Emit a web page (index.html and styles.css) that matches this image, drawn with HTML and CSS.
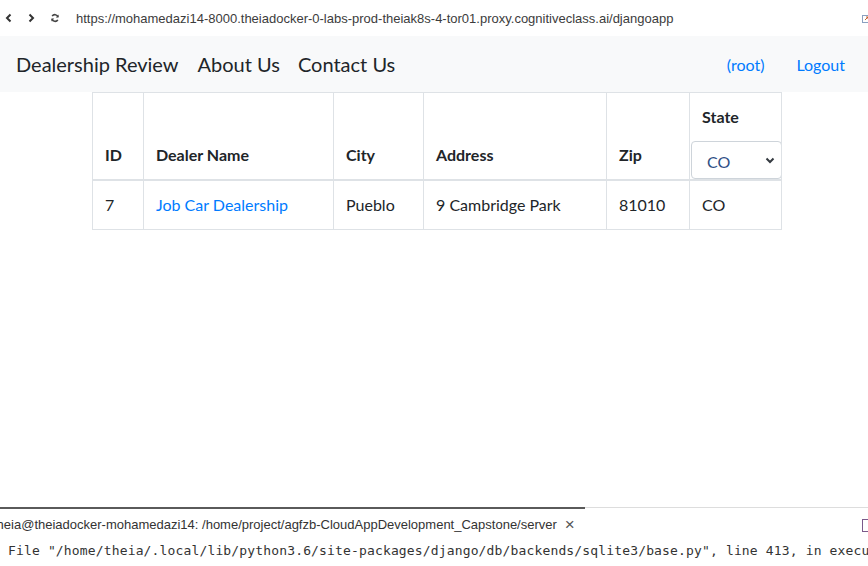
FILE: index.html
```html
<!DOCTYPE html>
<html>
<head>
<meta charset="utf-8">
<link rel="stylesheet" href="styles.css">
</head>
<body>
<div class="page">
  <div class="browserbar">
    <svg class="bicon" width="10" height="10" viewBox="0 0 10 10"><path d="M6.5 1.5 L3 5 L6.5 8.5" fill="none" stroke="#333" stroke-width="2"/></svg>
    <svg class="bicon" width="10" height="10" viewBox="0 0 10 10"><path d="M3.5 1.5 L7 5 L3.5 8.5" fill="none" stroke="#333" stroke-width="2"/></svg>
    <svg class="bicon" width="10" height="10" viewBox="0 0 10 10"><path d="M8 4 A3.2 3.2 0 0 0 2.2 3.2 M2 6 A3.2 3.2 0 0 0 7.8 6.8" fill="none" stroke="#444" stroke-width="1.6"/><path d="M8.6 1.6 L8.6 4.4 L5.8 4.4Z M1.4 8.4 L1.4 5.6 L4.2 5.6Z" fill="#444"/></svg>
    <span class="url">https://mohamedazi14-8000.theiadocker-0-labs-prod-theiak8s-4-tor01.proxy.cognitiveclass.ai/djangoapp</span>
    <svg class="popout" width="8" height="9" viewBox="0 0 8 9"><rect x="0.5" y="1.5" width="7" height="7" fill="none" stroke="#8aa0c0"/><path d="M3 6 L6 3 M4 3 H6 V5" stroke="#c06030" fill="none"/></svg>
  </div>
  <nav class="navbar">
    <a class="brand">Dealership Review</a>
    <a class="navlink">About Us</a>
    <a class="navlink">Contact Us</a>
    <div class="navright">
      <a class="userlink">(root)</a>
      <a class="userlink">Logout</a>
    </div>
  </nav>
  <main class="content">
    <table class="dealers">
      <thead>
        <tr>
          <th class="c-id">ID</th>
          <th class="c-name">Dealer Name</th>
          <th class="c-city">City</th>
          <th class="c-addr">Address</th>
          <th class="c-zip">Zip</th>
          <th class="c-state">
            <div class="state-label">State</div>
            <div class="select"><span>CO</span><svg width="10" height="7" viewBox="0 0 10 7"><path d="M1.5 1.5 L5 5 L8.5 1.5" fill="none" stroke="#343a40" stroke-width="2"/></svg></div>
          </th>
        </tr>
      </thead>
      <tbody>
        <tr>
          <td>7</td>
          <td><a class="dealer-link">Job Car Dealership</a></td>
          <td>Pueblo</td>
          <td>9 Cambridge Park</td>
          <td>81010</td>
          <td>CO</td>
        </tr>
      </tbody>
    </table>
  </main>
  <section class="panel">
    <div class="tabs">
      <div class="tab active"><span class="tabtitle">theia@theiadocker-mohamedazi14: /home/project/agfzb-CloudAppDevelopment_Capstone/server</span><span class="close">×</span></div>
      <div class="tabrest"><span class="maxicon"></span></div>
    </div>
    <div class="terminal">File "/home/theia/.local/lib/python3.6/site-packages/django/db/backends/sqlite3/base.py", line 413, in execute</div>
  </section>
</div>
</body>
</html>
```
FILE: styles.css
```css
html, body { margin: 0; padding: 0; }
body { width: 868px; height: 566px; overflow: hidden; background: #fff; }
.page { display: flex; flex-direction: column; height: 566px; }

.browserbar {
  height: 36px; display: flex; align-items: center; padding-left: 0;
  font-family: "Liberation Sans", Arial, sans-serif; font-size: 13px; color: #444;
  white-space: nowrap; overflow: hidden;
}
.bicon { margin: 0 6px 0 4px; flex: none; }
.bicon:nth-child(2) { margin-left: 6px; }
.bicon:nth-child(3) { margin-left: 8px; }
.url { margin-left: 10px; color: #3c3c3c; }
.popout { margin-left: auto; margin-right: -2px; flex: none; }

.navbar {
  height: 56px; background: #f8f9fa; display: flex; align-items: center;
  padding: 0 23px 0 16px; font-family: "Lato", "Noto Sans", sans-serif;
}
.brand { font-size: 20px; color: #212529; margin-right: 19px; }
.navlink { font-size: 20px; color: #212529; margin-right: 18px; }
.navright { margin-left: auto; display: flex; gap: 32px; }
.userlink { font-size: 16px; color: #007bff; }

.content { padding-left: 92px; }
.dealers {
  border-collapse: collapse; font-family: "Lato", "Noto Sans", sans-serif;
  font-size: 16px; color: #212529; line-height: 24px;
}
.dealers th, .dealers td {
  border: 1px solid #dee2e6; padding: 12px; text-align: left; vertical-align: bottom;
}
.dealers th { font-weight: 700; border-bottom-width: 2px; }
.dealers td { vertical-align: top; }
.c-id { width: 26px; }
.c-name { width: 165px; }
.c-city { width: 65px; }
.c-addr { width: 158px; }
.c-zip { width: 58px; }
.dealers th.c-state { width: 67px; padding-bottom: 0; }
.state-label { margin-bottom: 12px; }
.select {
  box-sizing: border-box; height: 38px; width: 91px; margin: 0 -13px 0 -11px;
  border: 1px solid #ced4da; border-radius: 4px; background: #fff;
  display: flex; align-items: center; justify-content: space-between;
  padding: 0 6px 0 15px; font-weight: 400; color: #2f4f86;
}
.select span { margin-top: 3px; }
.dealer-link { color: #007bff; }

.panel { margin-top: auto; display: flex; flex-direction: column; }
.tabs { display: flex; height: 33px; font-family: "Liberation Sans", Arial, sans-serif; font-size: 13px; color: #333; }
.tab.active {
  width: 585px; box-sizing: border-box; border-top: 2px solid #5a5a5a;
  display: flex; align-items: center; white-space: nowrap; overflow: hidden;
}
.tabtitle { margin-left: -7px; }
.close { margin-left: 8px; font-size: 17px; color: #555; line-height: 1; }
.tabrest { flex: 1; border-top: 1px solid #ddd; display: flex; align-items: center; justify-content: flex-end; }
.maxicon { width: 8px; height: 11px; border: 1px solid #7a5a8a; margin-right: -4px; margin-top: 2px; }
.terminal {
  height: 26px; padding-left: 8px; white-space: pre; overflow: hidden;
  font-family: "DejaVu Sans Mono", monospace; font-size: 13px; letter-spacing: 0.15px;
  color: #333; line-height: 22px;
}
```
